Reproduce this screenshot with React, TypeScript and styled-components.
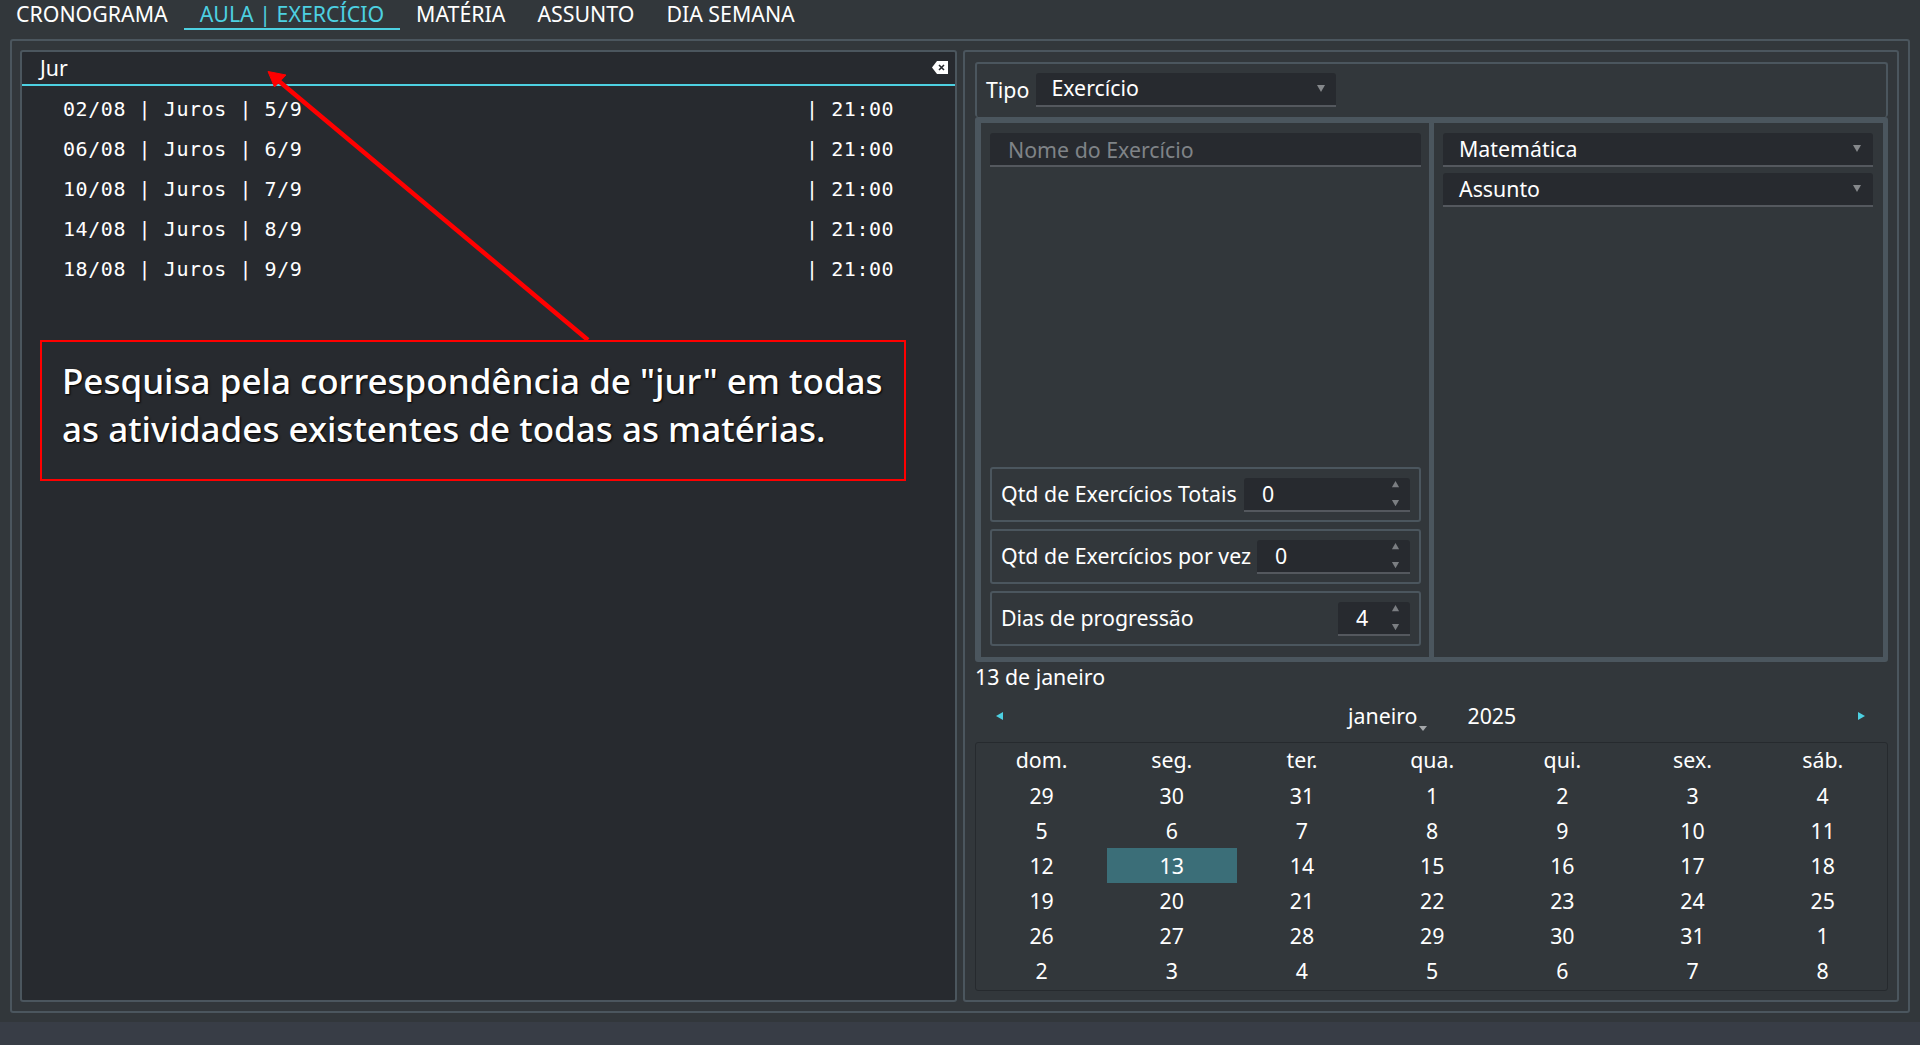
import React from 'react';
import styled, { createGlobalStyle } from 'styled-components';

const Global = createGlobalStyle`
  html, body { margin: 0; padding: 0; background: #32373b; }
  * { box-sizing: border-box; }
`;
const BORDER = '#4b565e';
const Page = styled.div`
  position: relative; width: 1920px; height: 1045px; overflow: hidden;
  display: flex; flex-direction: column; background: #32373b; color: #fff;
  font-family: "Noto Sans", sans-serif; font-size: 21.33px;
`;
const TabBar = styled.div`display: flex; height: 30px; flex: none;`;
const Tab = styled.div<{ $active?: boolean }>`
  height: 30px; padding: 0 16px; line-height: 28px; white-space: nowrap;
  color: ${p => (p.$active ? '#4dd0e1' : '#fff')};
  border-bottom: 2px solid ${p => (p.$active ? '#4dd0e1' : 'transparent')};
`;
const Outer = styled.div`
  margin: 9px 10px 0 10px; height: 974px; flex: none; display: flex; gap: 6px;
  padding: 9px 9px 9px 8px; border: 2px solid ${BORDER}; border-radius: 3px;
`;
const LeftPanel = styled.div`
  width: 937px; flex: none; display: flex; flex-direction: column;
  background: #272a2f; border: 2px solid ${BORDER}; border-radius: 3px;
`;
const Search = styled.div`
  height: 34px; flex: none; display: flex; align-items: center; justify-content: space-between;
  padding: 0 7px 2px 18px; border-bottom: 2px solid #4dd0e1;
`;
const List = styled.div`padding: 3px 0 0 41px; font-family: "DejaVu Sans Mono", monospace; font-size: 20px; letter-spacing: 0.56px;`;
const ListRow = styled.div`display: flex; height: 40px; align-items: center; white-space: pre;`;
const RowMain = styled.span`width: 743px; flex: none;`;
const RightPanel = styled.div`
  flex: 1; min-width: 0; display: flex; flex-direction: column;
  padding: 10px 9px 9px 10px; border: 2px solid ${BORDER}; border-radius: 3px;
`;
const TipoBox = styled.div`
  height: 55px; flex: none; display: flex; align-items: center; gap: 7px; padding: 0 10px 2px 9px;
  border: 2px solid ${BORDER}; border-bottom: none; border-radius: 3px;
`;
const Field = styled.div<{ $w?: number }>`
  height: 34px; display: flex; align-items: center; justify-content: space-between;
  background: #272a2f; border-bottom: 2px solid #54585e; border-radius: 3px 3px 0 0;
  padding-bottom: 2px;
  ${p => (p.$w ? `width: ${p.$w}px; flex: none;` : 'flex: none; width: 100%;')}
`;
const Combo = styled(Field)`padding-left: 15px; padding-right: 10px;`;
const WideCombo = styled(Combo)`padding-left: 16px; padding-right: 11px;`;
const Placeholder = styled(Field)`padding-left: 18px; padding-bottom: 0; color: #7f8387;`;
const Split = styled.div`
  height: 545px; flex: none; display: flex;
  border-style: solid; border-color: ${BORDER}; border-width: 6px 5px 5px 6px; border-radius: 3px;
`;
const PaneLeft = styled.div`
  width: 453px; flex: none; display: flex; flex-direction: column; padding: 10px 8px 11px 9px;
  border-right: 5px solid ${BORDER};
`;
const PaneRight = styled.div`flex: 1; display: flex; flex-direction: column; gap: 6px; padding: 10px 10px 0 9px;`;
const Spacer = styled.div`flex: 1;`;
const SpinRows = styled.div`display: flex; flex-direction: column; gap: 7px;`;
const SpinRow = styled.div`
  height: 55px; display: flex; align-items: center; justify-content: space-between; padding: 0 9px 0 9px;
  border: 2px solid ${BORDER}; border-radius: 3px;
`;
const SpinLabel = styled.span`position: relative; top: -1px;`;
const Spin = styled(Field)`padding-left: 18px; padding-right: 10px; padding-bottom: 0;`;
const Arrows = styled.div`display: flex; flex-direction: column; gap: 11px; width: 10px; align-items: center;`;
const DateLabel = styled.div`height: 30px; flex: none; line-height: 29px;`;
const Nav = styled.div`
  height: 50px; flex: none; display: flex; align-items: center; padding: 0 23px 3px 21px;
`;
const NavCenter = styled.div`flex: 1; display: flex; padding-left: 345px; gap: 50px; align-items: center;`;
const Month = styled.span`position: relative;`;
const MonthCaret = styled.svg`position: absolute; right: -10px; bottom: -1px;`;
const Calendar = styled.div`
  height: 249px; flex: none; display: grid; grid-template-columns: repeat(7, 130.2px); grid-auto-rows: 35px;
  align-content: start; padding: 0 0 0 0.5px; border: 1px solid #262a2e; border-radius: 3px;
`;
const Cell = styled.div<{ $sel?: boolean; $head?: boolean }>`
  display: flex; align-items: center; justify-content: center;
  padding-bottom: ${p => (p.$head ? 2 : 0)}px;
  background: ${p => (p.$sel ? '#3b6e78' : 'transparent')};
`;
const Callout = styled.div`
  position: absolute; left: 40px; top: 340px; width: 866px; height: 141px;
  border: 2px solid #f00; padding: 15px 0 0 20px; background: #272a2f;
  font-size: 35px; line-height: 48px; font-weight: 500; white-space: nowrap;
  text-shadow: 1px 1px 2px #000;
`;
const ArrowOverlay = styled.svg`position: absolute; left: 0; top: 0; pointer-events: none;`;
const StatusBar = styled.div`height: 23px; margin-top: auto; background: #383d46; flex: none;`;

const Tri = ({ dir = 'down', c = '#85888b', s = 10 }: { dir?: 'up' | 'down'; c?: string; s?: number }) => (
  <svg width={s} height={s * 0.8} viewBox="0 0 10 8">
    <path d={dir === 'down' ? 'M1 1h8L5 8z' : 'M5 0l4 7H1z'} fill={c} />
  </svg>
);
const SpinArrows = () => (
  <Arrows><Tri dir="up" s={9} c="#7b7e82" /><Tri s={9} c="#7b7e82" /></Arrows>
);

const rows = ['02/08 | Juros | 5/9', '06/08 | Juros | 6/9', '10/08 | Juros | 7/9', '14/08 | Juros | 8/9', '18/08 | Juros | 9/9'];
const days = ['dom.', 'seg.', 'ter.', 'qua.', 'qui.', 'sex.', 'sáb.',
  29, 30, 31, 1, 2, 3, 4, 5, 6, 7, 8, 9, 10, 11, 12, 13, 14, 15, 16, 17, 18, 19, 20, 21, 22, 23, 24, 25, 26, 27, 28, 29, 30, 31, 1, 2, 3, 4, 5, 6, 7, 8];

export default function App() {
  return (
    <Page>
      <Global />
      <TabBar>
        <Tab>CRONOGRAMA</Tab>
        <Tab $active>AULA | EXERCÍCIO</Tab>
        <Tab>MATÉRIA</Tab>
        <Tab>ASSUNTO</Tab>
        <Tab>DIA SEMANA</Tab>
      </TabBar>
      <Outer>
        <LeftPanel>
          <Search>
            <span>Jur</span>
            <svg width="16" height="13" viewBox="0 0 16 13">
              <path d="M0 6.5L5 0h11v13H5z" fill="#fff" />
              <path d="M7 4l5 5M12 4l-5 5" stroke="#272a2f" strokeWidth="1.6" />
            </svg>
          </Search>
          <List>
            {rows.map(r => (
              <ListRow key={r}><RowMain>{r}</RowMain><span>| 21:00</span></ListRow>
            ))}
          </List>
        </LeftPanel>
        <RightPanel>
          <TipoBox>
            <span>Tipo</span>
            <Combo $w={300}>Exercício<Tri /></Combo>
          </TipoBox>
          <Split>
            <PaneLeft>
              <Placeholder>Nome do Exercício</Placeholder>
              <Spacer />
              <SpinRows>
                <SpinRow><SpinLabel>Qtd de Exercícios Totais</SpinLabel><Spin $w={166}>0<SpinArrows /></Spin></SpinRow>
                <SpinRow><SpinLabel>Qtd de Exercícios por vez</SpinLabel><Spin $w={153}>0<SpinArrows /></Spin></SpinRow>
                <SpinRow><SpinLabel>Dias de progressão</SpinLabel><Spin $w={72}>4<SpinArrows /></Spin></SpinRow>
              </SpinRows>
            </PaneLeft>
            <PaneRight>
              <WideCombo>Matemática<Tri /></WideCombo>
              <WideCombo>Assunto<Tri /></WideCombo>
            </PaneRight>
          </Split>
          <DateLabel>13 de janeiro</DateLabel>
          <Nav>
            <svg width="7" height="8" viewBox="0 0 7 8"><path d="M7 0v8L0 4z" fill="#4dd0e1" /></svg>
            <NavCenter>
              <Month>janeiro
                <MonthCaret width="8" height="5" viewBox="0 0 8 5"><path d="M0 0h8L4 5z" fill="#a5a8ab" /></MonthCaret>
              </Month>
              <span>2025</span>
            </NavCenter>
            <svg width="7" height="8" viewBox="0 0 7 8"><path d="M0 0v8l7-4z" fill="#4dd0e1" /></svg>
          </Nav>
          <Calendar>
            {days.map((d, i) => <Cell key={i} $sel={i === 22} $head={i < 7}>{d}</Cell>)}
          </Calendar>
        </RightPanel>
      </Outer>
      <StatusBar />
      <ArrowOverlay width="1920" height="1045" viewBox="0 0 1920 1045">
        <path d="M588 340L274 77" stroke="#f00" strokeWidth="4.5" />
        <path d="M268 71.5L286 75L274.5 87z" fill="#f00" stroke="#f00" strokeWidth="1" />
      </ArrowOverlay>
      <Callout>Pesquisa pela correspondência de "jur" em todas<br />as atividades existentes de todas as matérias.</Callout>
    </Page>
  );
}
